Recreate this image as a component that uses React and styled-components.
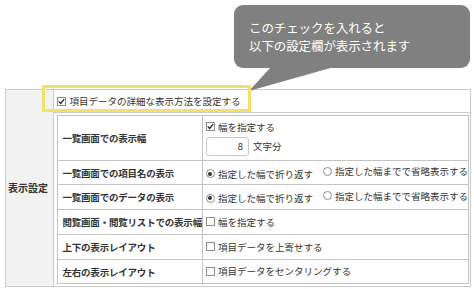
import React from "react";
import styled, { createGlobalStyle } from "styled-components";

const Global = createGlobalStyle`
  html, body { margin: 0; padding: 0; background: #fff; }
  body { font-family: "Noto Sans CJK JP", "Noto Sans", sans-serif; color: #333; }
`;

const Page = styled.div`
  width: 474px;
  box-sizing: border-box;
  padding: 5px 3px 0 5px;
`;

const CalloutRow = styled.div`
  display: flex;
  justify-content: flex-end;
  margin-bottom: 21px;
  padding-right: 1px;
`;

const Callout = styled.div`
  position: relative;
  width: 236px;
  height: 63px;
  box-sizing: border-box;
  background: #808080;
  border-radius: 9px;
  padding: 14px 0 0 15px;
  color: #fff;
  font-size: 12.5px;
  line-height: 18px;
  letter-spacing: -0.1px;
`;

const Tail = styled.svg`
  position: absolute;
  left: 0;
  top: 0;
  overflow: visible;
  pointer-events: none;
`;

const OuterTable = styled.table`
  width: 466px;
  border-collapse: collapse;
  border: 1px solid #cbcbcb;
  font-size: 9.5px;
  line-height: 12px;
`;

const HeadCell = styled.th`
  width: 49px;
  background: #f2f2f2;
  border: 1px solid #cbcbcb;
  text-align: left;
  vertical-align: middle;
  padding: 0 0 0 2px;
  font-size: 10px;
  font-weight: 700;
  color: #333;
  box-sizing: border-box;
`;

const TopCell = styled.td`
  position: relative;
  height: 22px;
  border: 1px solid #cbcbcb;
  padding: 0 0 0 3px;
  vertical-align: middle;
`;

const Highlight = styled.div`
  position: absolute;
  left: -12px;
  top: -5px;
  width: 209px;
  height: 27px;
  box-sizing: border-box;
  border: 3px solid #f3e16a;
  pointer-events: none;
`;

const NestCell = styled.td`
  border: 1px solid #cbcbcb;
  padding: 2px 1px 2px 3px;
`;

const InnerTable = styled.table`
  width: 100%;
  border-collapse: collapse;
  border: 1px solid #b9b9b9;
`;

const Row = styled.tr`
  height: ${(p) => p.$h}px;
`;

const Label = styled.td`
  width: 146px;
  border: 1px solid #c4c4c4;
  padding: 0 0 0 4px;
  font-weight: 700;
  color: #333;
  white-space: nowrap;
  box-sizing: border-box;
  letter-spacing: -0.2px;
`;

const Value = styled.td`
  border: 1px solid #c4c4c4;
  padding: 0 0 0 3px;
  white-space: nowrap;
`;

const Option = styled.span`
  display: inline-flex;
  align-items: center;
  gap: 3px;
  margin-right: ${(p) => (p.$spaced ? "10px" : "0")};
  color: #333;
  font-size: 9.5px;
`;

const Box = styled.span`
  display: inline-flex;
  align-items: center;
  justify-content: center;
  width: 9px;
  height: 9px;
  box-sizing: border-box;
  border: 1px solid #8c8c8c;
  background: #fff;
`;

const Circle = styled.span`
  display: inline-flex;
  align-items: center;
  justify-content: center;
  width: 9px;
  height: 9px;
  box-sizing: border-box;
  border: 1px solid #8c8c8c;
  border-radius: 50%;
  background: #fff;
  &::after {
    content: "";
    display: ${(p) => (p.$on ? "block" : "none")};
    width: 4px;
    height: 4px;
    border-radius: 50%;
    background: #333;
  }
`;

const Stack = styled.div`
  display: flex;
  flex-direction: column;
  gap: 4px;
  padding: 3px 0;
`;

const InputLine = styled.div`
  display: flex;
  align-items: center;
  gap: 4px;
`;

const NumInput = styled.input`
  width: 43px;
  height: 19px;
  box-sizing: border-box;
  border: 1px solid #c8c8c8;
  border-radius: 3px;
  padding: 0 5px 0 0;
  text-align: right;
  font: inherit;
  font-size: 9.5px;
  color: #333;
  background: #fff;
`;

function Check({ on, children }) {
  return (
    <Option>
      <Box>
        {on && (
          <svg width="7" height="7" viewBox="0 0 7 7">
            <path d="M0.8 3.4 L2.7 5.4 L6.2 1.1" fill="none" stroke="#222" strokeWidth="1.3" />
          </svg>
        )}
      </Box>
      {children}
    </Option>
  );
}

function Radio({ on, children, spaced }) {
  return (
    <Option $spaced={spaced}>
      <Circle $on={on} />
      {children}
    </Option>
  );
}

export default function App() {
  return (
    <>
      <Global />
      <Page>
        <CalloutRow>
          <Callout>
            このチェックを入れると
            <br />
            以下の設定欄が表示されます
            <Tail width="1" height="1">
              <polygon points="37,62 100,62 15,86" fill="#808080" />
            </Tail>
          </Callout>
        </CalloutRow>
        <OuterTable>
          <tbody>
            <tr>
              <HeadCell rowSpan={2}>表示設定</HeadCell>
              <TopCell>
                <Check on>項目データの詳細な表示方法を設定する</Check>
                <Highlight />
              </TopCell>
            </tr>
            <tr>
              <NestCell>
                <InnerTable>
                  <tbody>
                    <Row $h={45}>
                      <Label>一覧画面での表示幅</Label>
                      <Value>
                        <Stack>
                          <Check on>幅を指定する</Check>
                          <InputLine>
                            <NumInput readOnly value="8" />
                            <span>文字分</span>
                          </InputLine>
                        </Stack>
                      </Value>
                    </Row>
                    <Row $h={24}>
                      <Label>一覧画面での項目名の表示</Label>
                      <Value>
                        <Radio on spaced>指定した幅で折り返す</Radio>
                        <Radio>指定した幅までで省略表示する</Radio>
                      </Value>
                    </Row>
                    <Row $h={25}>
                      <Label>一覧画面でのデータの表示</Label>
                      <Value>
                        <Radio on spaced>指定した幅で折り返す</Radio>
                        <Radio>指定した幅までで省略表示する</Radio>
                      </Value>
                    </Row>
                    <Row $h={25}>
                      <Label>閲覧画面・閲覧リストでの表示幅</Label>
                      <Value>
                        <Check>幅を指定する</Check>
                      </Value>
                    </Row>
                    <Row $h={25}>
                      <Label>上下の表示レイアウト</Label>
                      <Value>
                        <Check>項目データを上寄せする</Check>
                      </Value>
                    </Row>
                    <Row $h={24}>
                      <Label>左右の表示レイアウト</Label>
                      <Value>
                        <Check>項目データをセンタリングする</Check>
                      </Value>
                    </Row>
                  </tbody>
                </InnerTable>
              </NestCell>
            </tr>
          </tbody>
        </OuterTable>
      </Page>
    </>
  );
}
